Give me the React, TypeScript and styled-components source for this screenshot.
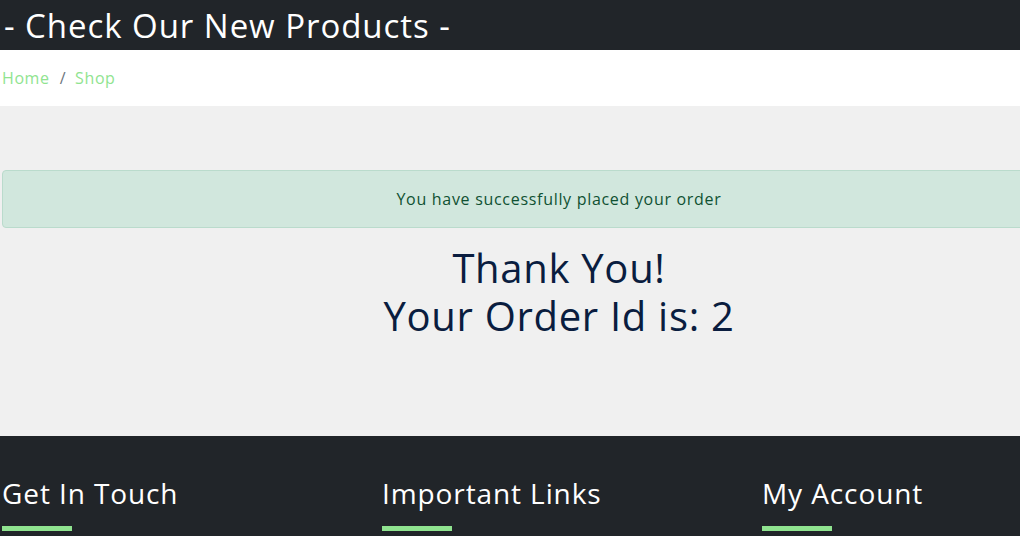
import React from "react";
import styled, { createGlobalStyle } from "styled-components";

const Global = createGlobalStyle`
  html, body { margin: 0; padding: 0; }
  body {
    font-family: "Open Sans", "Noto Sans", sans-serif;
    background: #f0f0f0;
    overflow: hidden;
  }
  * { box-sizing: border-box; }
`;

const FONT = `"Open Sans", "Noto Sans", sans-serif`;

const Page = styled.div`
  width: 1020px;
  height: 536px;
  overflow: hidden;
  display: flex;
  flex-direction: column;
`;

const TitleBar = styled.header`
  height: 50px;
  background: #212529;
  display: flex;
  align-items: center;
  padding: 0 4px;
`;

const Title = styled.h1`
  margin: 0;
  font-family: ${FONT};
  font-weight: 500;
  font-size: 33px;
  line-height: 1;
  color: #ffffff;
  letter-spacing: 0.95px;
  white-space: nowrap;
`;

const Crumbs = styled.nav`
  height: 56px;
  background: #ffffff;
  display: flex;
  align-items: center;
  padding: 0 2px;
  font-family: ${FONT};
  font-size: 16px;
  letter-spacing: 0.6px;
`;

const Crumb = styled.a`
  color: #90e490;
  text-decoration: none;
`;

const Sep = styled.span`
  color: #6c757d;
  padding: 0 9px 0 10px;
`;

const Main = styled.main`
  background: #f0f0f0;
  height: 330px;
  padding: 64px 0 0 2px;
`;

const Alert = styled.div`
  width: 1114px;
  padding: 16px;
  border: 1px solid #badbcc;
  border-radius: 4px;
  background: #d1e7dd;
  color: #0f5132;
  font-family: ${FONT};
  font-size: 16px;
  letter-spacing: 0.7px;
  line-height: 24px;
  text-align: center;
  margin-bottom: 16px;
  white-space: nowrap;
`;

const Thanks = styled.h2`
  margin: 0;
  width: 1114px;
  text-align: center;
  font-family: ${FONT};
  font-weight: 500;
  font-size: 40px;
  line-height: 48px;
  letter-spacing: 0.7px;
  color: #0a1d3f;
`;

const Line = styled.span`
  display: block;
`;

const Footer = styled.footer`
  flex: 1;
  background: #212529;
  padding: 40px 0 0 2px;
  display: grid;
  grid-template-columns: repeat(3, 380px);
  align-content: start;
`;

const Column = styled.div`
  display: flex;
  flex-direction: column;
`;

const ColHeading = styled.h3`
  margin: 0 0 16px;
  font-family: ${FONT};
  font-weight: 500;
  font-size: 28px;
  line-height: 34px;
  letter-spacing: 0.9px;
  color: #ffffff;
  white-space: nowrap;
`;

const Bar = styled.span`
  display: block;
  width: 70px;
  height: 5px;
  background: #8fe38f;
`;

export default function App() {
  const cols = ["Get In Touch", "Important Links", "My Account"];
  return (
    <>
      <Global />
      <Page>
        <TitleBar>
          <Title>- Check Our New Products -</Title>
        </TitleBar>
        <Crumbs>
          <Crumb href="#">Home</Crumb>
          <Sep>/</Sep>
          <Crumb href="#">Shop</Crumb>
        </Crumbs>
        <Main>
          <Alert>You have successfully placed your order</Alert>
          <Thanks>
            <Line>Thank You!</Line>
            <Line>Your Order Id is: 2</Line>
          </Thanks>
        </Main>
        <Footer>
          {cols.map((c) => (
            <Column key={c}>
              <ColHeading>{c}</ColHeading>
              <Bar />
            </Column>
          ))}
        </Footer>
      </Page>
    </>
  );
}
